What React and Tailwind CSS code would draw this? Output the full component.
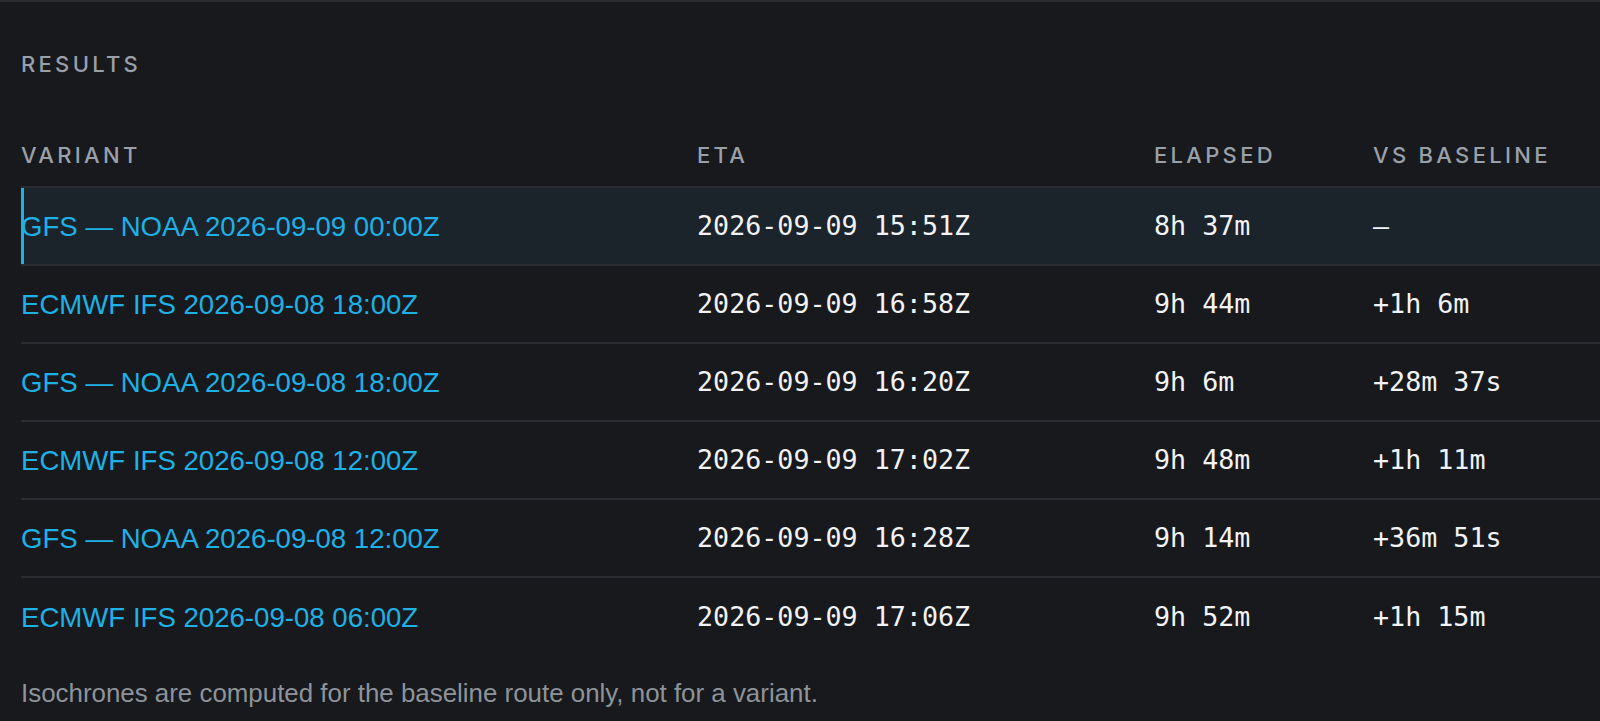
import React from 'react';

const rows = [
  { variant: 'GFS — NOAA 2026-09-09 00:00Z', eta: '2026-09-09 15:51Z', elapsed: '8h 37m', delta: '—', active: true },
  { variant: 'ECMWF IFS 2026-09-08 18:00Z', eta: '2026-09-09 16:58Z', elapsed: '9h 44m', delta: '+1h 6m' },
  { variant: 'GFS — NOAA 2026-09-08 18:00Z', eta: '2026-09-09 16:20Z', elapsed: '9h 6m', delta: '+28m 37s' },
  { variant: 'ECMWF IFS 2026-09-08 12:00Z', eta: '2026-09-09 17:02Z', elapsed: '9h 48m', delta: '+1h 11m' },
  { variant: 'GFS — NOAA 2026-09-08 12:00Z', eta: '2026-09-09 16:28Z', elapsed: '9h 14m', delta: '+36m 51s' },
  { variant: 'ECMWF IFS 2026-09-08 06:00Z', eta: '2026-09-09 17:06Z', elapsed: '9h 52m', delta: '+1h 15m' },
];

const grid = 'grid grid-cols-[676px_457px_219px_1fr]';
const mono = "font-['DejaVu_Sans_Mono',monospace] text-[26.7px] text-[#f2f3f5]";
const label = "font-['Inter',sans-serif] font-medium text-[22px] leading-[32px] tracking-[0.15em] text-[#9aa0a8]";

export default function App() {
  return (
    <div className="min-h-screen overflow-hidden bg-[#18191c] border-t-2 border-[#2a2c30] pl-[21px] pt-[46px] font-['Liberation_Sans',Arial,sans-serif]">
      <h2 className={`mb-[59px] ${label}`}>RESULTS</h2>

      <div className={`${grid} pb-[15px] border-b-2 border-[#2a2c31] ${label}`}>
        <div>VARIANT</div>
        <div>ETA</div>
        <div>ELAPSED</div>
        <div className="whitespace-nowrap">VS BASELINE</div>
      </div>

      {rows.map((r, i) => (
        <div
          key={i}
          className={`${grid} h-[78px] items-center ${i < rows.length - 1 ? 'border-b-2 border-[#2a2c31]' : ''} ${r.active ? 'bg-[#1b232b] shadow-[inset_3px_0_0_#1eb1e6]' : ''}`}
        >
          <div className="pt-[2px] text-[27.6px] text-[#1eb1e6] whitespace-nowrap">{r.variant}</div>
          <div className={mono}>{r.eta}</div>
          <div className={mono}>{r.elapsed}</div>
          <div className={mono}>{r.delta}</div>
        </div>
      ))}

      <p className="mt-[19px] text-[25.9px] leading-[36px] text-[#8e939a]">
        Isochrones are computed for the baseline route only, not for a variant.
      </p>
    </div>
  );
}
